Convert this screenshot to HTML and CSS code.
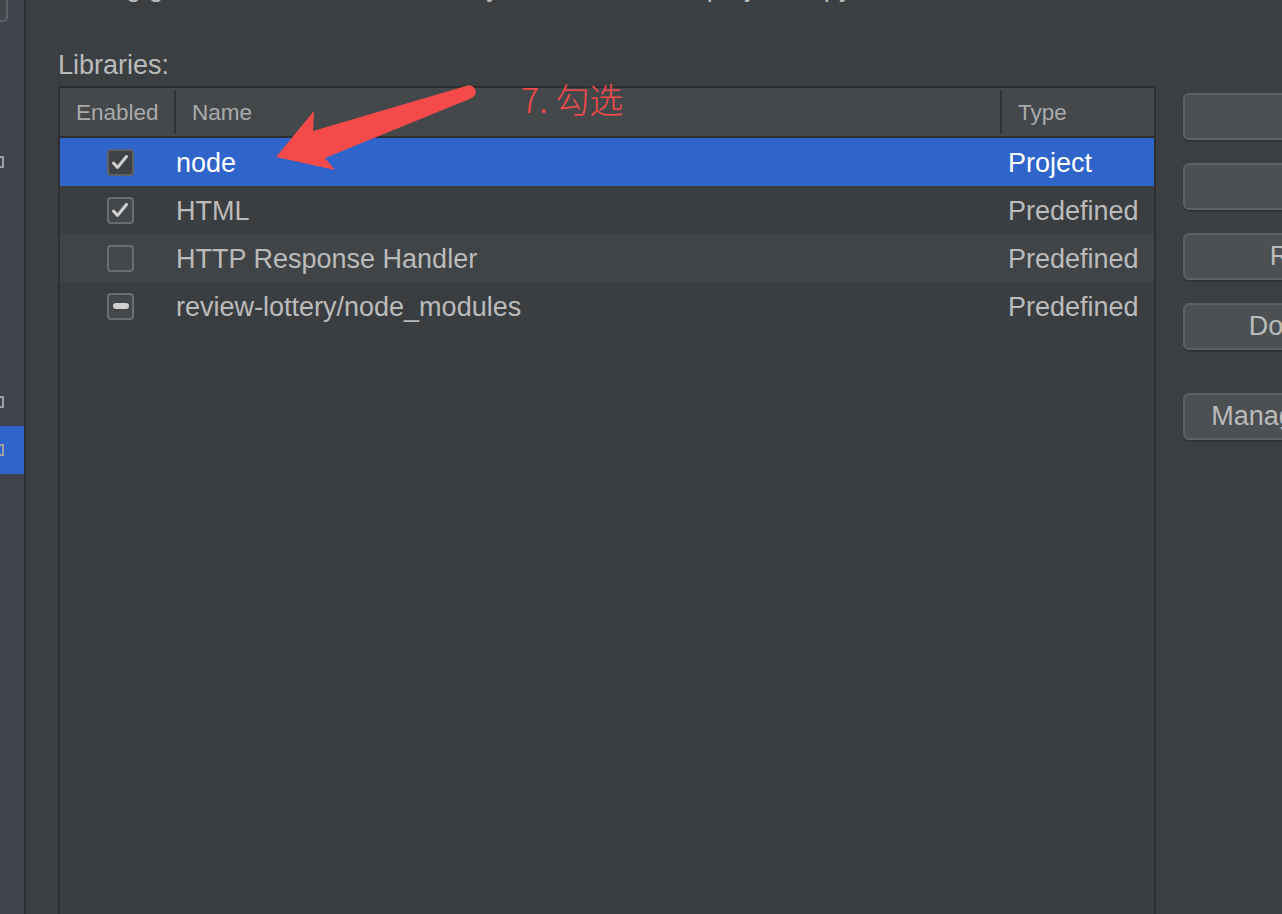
FILE: index.html
```html
<!DOCTYPE html>
<html lang="en">
<head>
<meta charset="utf-8">
<title>Libraries</title>
<link rel="stylesheet" href="styles.css">
</head>
<body>
<div class="page">
  <aside class="sidebar">
    <div class="search-end"></div>
    <div class="nav">
      <div class="nav-item"><span class="nav-icon"></span></div>
      <div class="nav-item"></div>
      <div class="nav-item"></div>
      <div class="nav-item"></div>
      <div class="nav-item"></div>
      <div class="nav-item"><span class="nav-icon"></span></div>
      <div class="nav-item selected"><span class="nav-icon"></span></div>
    </div>
  </aside>

  <main class="main">
    <p class="desc">Using global libraries for code analysis of the current project copy</p>
    <div class="label">Libraries:</div>
    <div class="content">
      <div class="table">
        <div class="thead">
          <div class="th th-enabled">Enabled</div>
          <div class="th-sep"></div>
          <div class="th th-name">Name</div>
          <div class="th-sep"></div>
          <div class="th th-type">Type</div>
        </div>
        <div class="row selected">
          <div class="cell-check"><span class="checkbox checked"><svg viewBox="0 0 27 27" class="tick"><path d="M6.5 14 L10.5 18.5 L19.5 7.5"/></svg></span></div>
          <div class="cell-name">node</div>
          <div class="cell-type">Project</div>
        </div>
        <div class="row">
          <div class="cell-check"><span class="checkbox checked"><svg viewBox="0 0 27 27" class="tick"><path d="M6.5 14 L10.5 18.5 L19.5 7.5"/></svg></span></div>
          <div class="cell-name">HTML</div>
          <div class="cell-type">Predefined</div>
        </div>
        <div class="row alt">
          <div class="cell-check"><span class="checkbox"></span></div>
          <div class="cell-name">HTTP Response Handler</div>
          <div class="cell-type">Predefined</div>
        </div>
        <div class="row">
          <div class="cell-check"><span class="checkbox partial"><span class="dash"></span></span></div>
          <div class="cell-name">review-lottery/node_modules</div>
          <div class="cell-type">Predefined</div>
        </div>
      </div>
      <div class="buttons">
        <button class="btn">Add...</button>
        <button class="btn">Edit...</button>
        <button class="btn">Remove</button>
        <button class="btn">Download...</button>
        <button class="btn btn-gap">Manage Scopes...</button>
      </div>
    </div>
  </main>

  <svg class="arrow" viewBox="0 0 220 100" width="220" height="100">
    <path d="M196 6 L43 51 L44 31 L6 77 L65 90 L55 78 L202 18 A6.7 6.7 0 0 0 196 6 Z"/>
  </svg>
  <div class="note">7. 勾选</div>
</div>
</body>
</html>
```

FILE: styles.css
```css
* { box-sizing: border-box; }

html, body {
  margin: 0;
  padding: 0;
  width: 1282px;
  height: 914px;
  overflow: hidden;
  background: #3c3f41;
}

.page {
  position: relative;
  display: flex;
  width: 1282px;
  height: 914px;
  overflow: hidden;
  font-family: "Liberation Sans", Arial, sans-serif;
  color: #bbbbbb;
}

/* ---------- sidebar ---------- */
.sidebar {
  width: 26px;
  flex: none;
  background: #3f434b;
  border-right: 2px solid #2c2e30;
  display: flex;
  flex-direction: column;
}

.search-end {
  width: 8px;
  height: 22px;
  border-right: 2px solid #5d6166;
  border-bottom: 2px solid #5d6166;
  border-bottom-right-radius: 5px;
  background: #42464d;
}

.nav {
  margin-top: 116px;
  display: flex;
  flex-direction: column;
}

.nav-item {
  height: 48px;
  display: flex;
  align-items: center;
}

.nav-item.selected { background: #2f65ca; }

.nav-icon {
  width: 4px;
  height: 12px;
  border: 2px solid #9ea2a7;
  border-left: none;
}

/* ---------- main ---------- */
.main {
  flex: 1;
  padding-left: 32px;
  display: flex;
  flex-direction: column;
  min-width: 0;
}

.desc {
  margin: -29px 0 0 0;
  font-size: 27px;
  line-height: 32px;
  white-space: nowrap;
  padding-left: 14px;
}

.label {
  margin-top: 46px;
  font-size: 27px;
  line-height: 32px;
  color: #bbbbbb;
}

.content {
  margin-top: 5px;
  display: flex;
  align-items: flex-start;
  flex: 1;
}

/* ---------- table ---------- */
.table {
  width: 1098px;
  flex: none;
  height: 900px;
  border: 2px solid #2d2f31;
  background: #3b3e41;
}

.thead {
  height: 50px;
  display: flex;
  align-items: center;
  background: #45484a;
  border-bottom: 2px solid #2d2f31;
  font-size: 22.5px;
  color: #a8aaac;
}

.th { padding-left: 16px; line-height: 48px; padding-top: 1px; }
.th-enabled { width: 114px; }
.th-name { width: 824px; }
.th-type { flex: 1; }

.th-sep {
  width: 2px;
  height: 44px;
  background: #2f3133;
}

.row {
  height: 48px;
  display: grid;
  grid-template-columns: 116px 832px 1fr;
  align-items: center;
  font-size: 27px;
  color: #bbbbbb;
}

.row.alt { background: #414446; }

.row.selected {
  background: #2f65ca;
  color: #ffffff;
}

.cell-check {
  padding-left: 47px;
  display: flex;
  align-items: center;
}

.cell-name, .cell-type {
  white-space: nowrap;
  padding-top: 2px;
}

.checkbox {
  width: 27px;
  height: 27px;
  border: 2px solid #6a6c6e;
  border-radius: 4px;
  background: #43474a;
  display: flex;
  align-items: center;
  justify-content: center;
}

.row.selected .checkbox {
  background: #3f4245;
  border-color: #5f6264;
}

.checkbox.partial .dash {
  width: 16px;
  height: 6px;
  border-radius: 3px;
  background: #d0d0d0;
}

.tick {
  width: 27px;
  height: 27px;
  flex: none;
  margin: -2px;
}

.tick path {
  fill: none;
  stroke: #d0d0d0;
  stroke-width: 3;
  stroke-linecap: round;
  stroke-linejoin: round;
}

/* ---------- buttons ---------- */
.buttons {
  margin-left: 27px;
  margin-top: 7px;
  display: flex;
  flex-direction: column;
  gap: 23px;
  flex: none;
}

.btn {
  width: 274px;
  height: 47px;
  background: #4c5052;
  border: 2px solid #5e6162;
  border-radius: 6px;
  box-shadow: 0 2px 0 rgba(0, 0, 0, 0.18);
  font-family: "Liberation Sans", Arial, sans-serif;
  font-size: 27px;
  color: #bbbbbb;
  text-align: center;
  padding: 0;
  white-space: nowrap;
}

.btn-gap { margin-top: 20px; }

/* ---------- annotation ---------- */
.arrow {
  position: absolute;
  left: 270px;
  top: 80px;
}

.arrow path { fill: #f44b4a; }

.note {
  position: absolute;
  left: 521px;
  top: 82px;
  font-family: "Noto Sans CJK SC", "Liberation Sans", sans-serif;
  font-size: 34px;
  line-height: 34px;
  font-weight: 300;
  color: #f24b4b;
  white-space: nowrap;
}
```
